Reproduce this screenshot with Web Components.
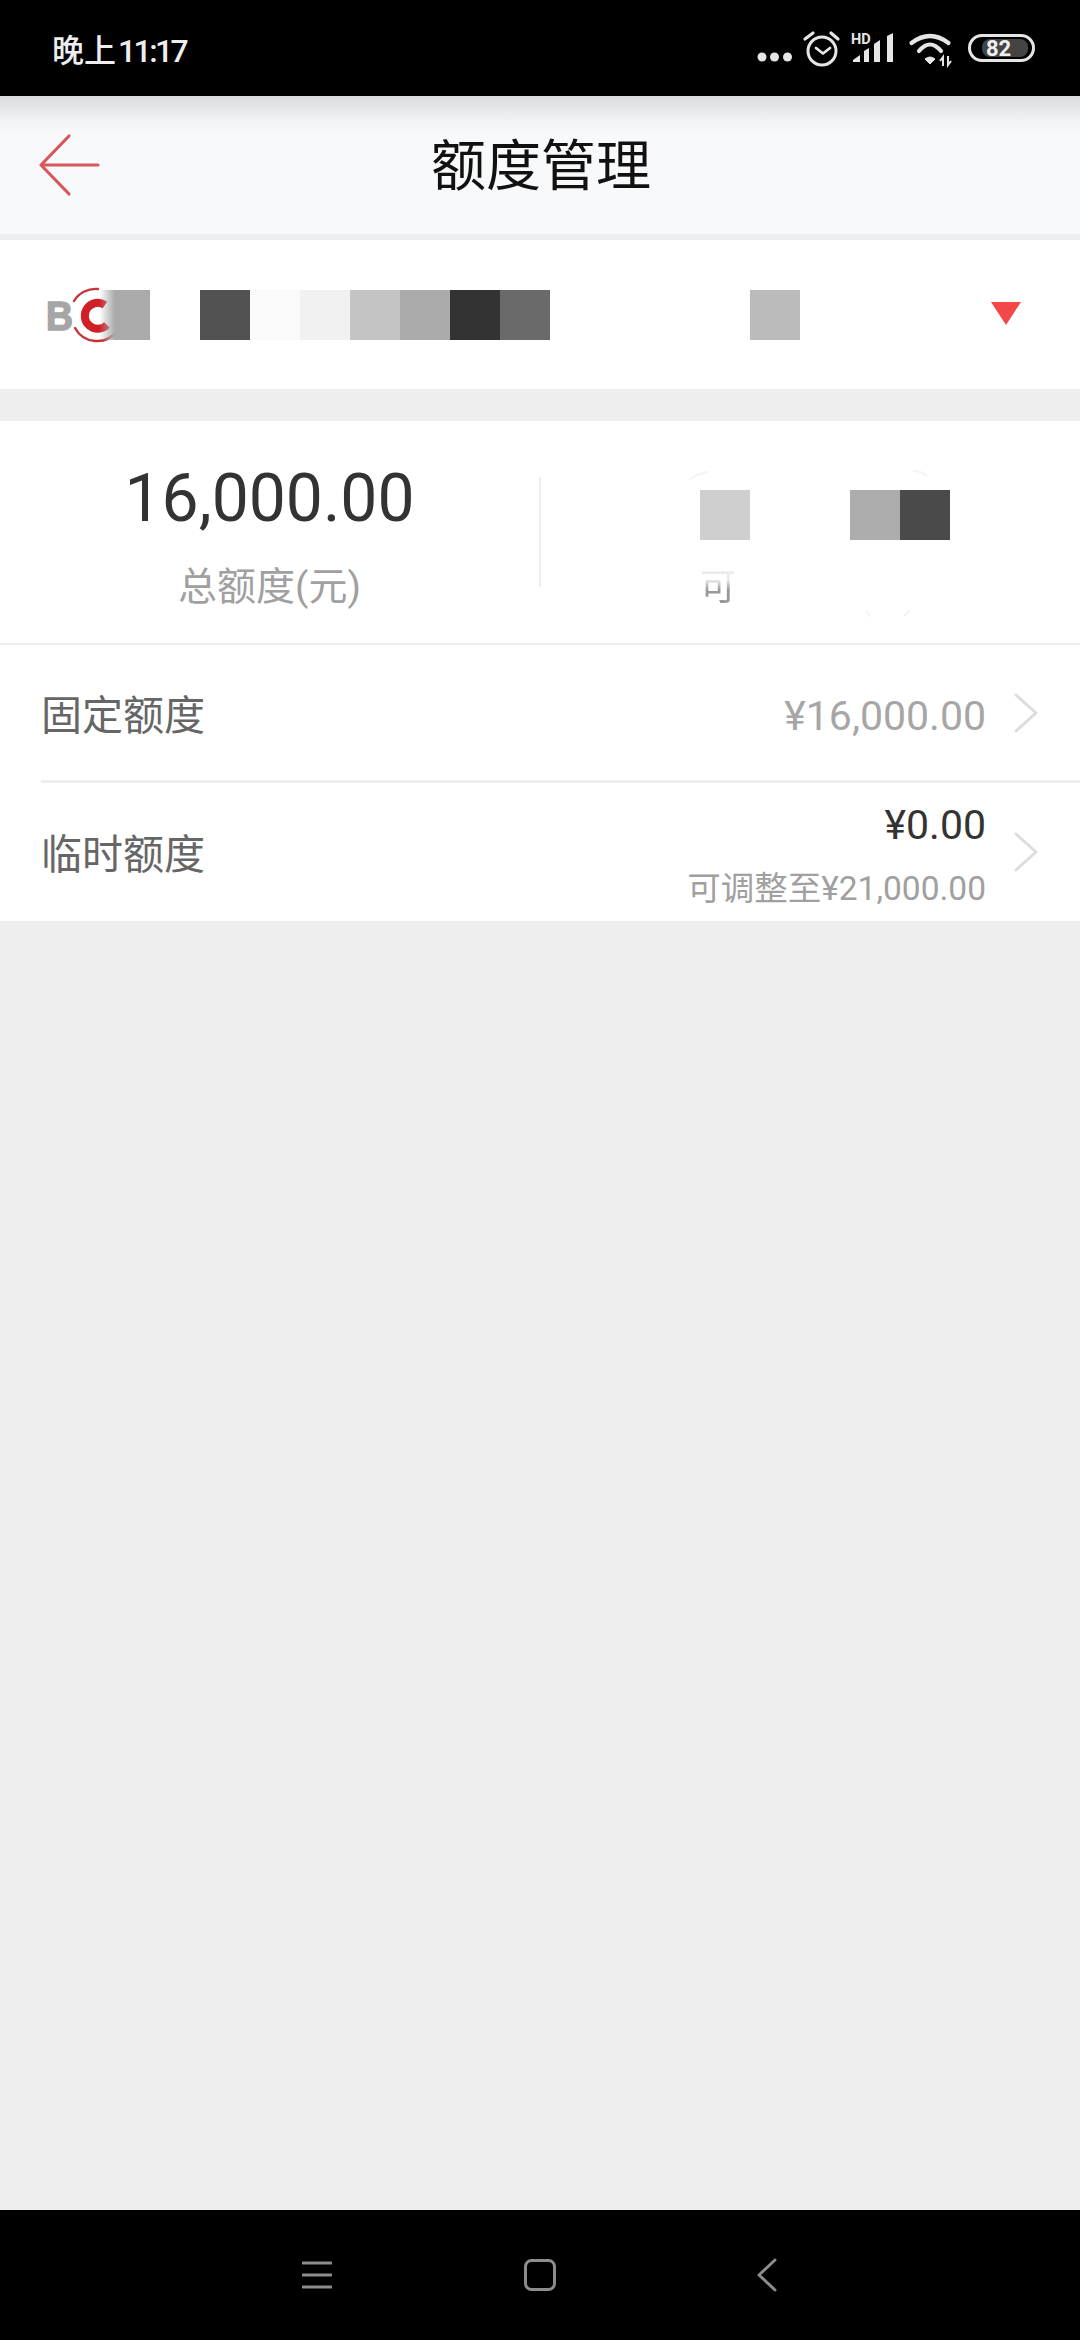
<!DOCTYPE html>
<html lang="zh">
<head>
<meta charset="utf-8">
<title>额度管理</title>
<style>
  html, body { margin: 0; padding: 0; }
  body {
    width: 1080px;
    height: 2340px;
    display: flex;
    flex-direction: column;
    background: #eeeeee;
    font-family: Roboto, "Noto Sans CJK SC", sans-serif;
    overflow: hidden;
  }
</style>
</head>
<body>
  <status-bar></status-bar>
  <app-header>额度管理</app-header>
  <account-card></account-card>
  <quota-stats></quota-stats>
  <quota-row label="固定额度" value="¥16,000.00" muted></quota-row>
  <quota-row label="临时额度" value="¥0.00" note="可调整至¥21,000.00" inset></quota-row>
  <nav-bar></nav-bar>

<script>
  // Base class, every element only differs by its markup
  class ShadowElement extends HTMLElement {
    constructor() {
      super();
      this.attachShadow({ mode: "open" });
    }
    connectedCallback() {
      this.shadowRoot.innerHTML = this.markup();
    }
  }

  class StatusBar extends ShadowElement {
    markup() {
      return `
        <style>
          :host { display: flex; align-items: center; height: 96px; flex: none; background: #000; color: #eee; box-sizing: border-box; padding: 0 0 0 52px; }
          .time { font-size: 32px; font-weight: 500; margin-top: -1px; }
          .time b { font-weight: 500; letter-spacing: -2.600px; margin-left: 2px; }
          svg { margin-left: auto; display: block; }
          text { font-family: Roboto, sans-serif; font-weight: 700; }
        </style>
        <span class="time">晚上<b>11:17</b></span>
        <svg width="323" height="96" viewBox="757 0 323 96" fill="none">
          <g fill="#e6e6e6">
            <circle cx="762" cy="57" r="4.500"/><circle cx="774.500" cy="57" r="4.500"/><circle cx="787.500" cy="57" r="4.500"/>
          </g>
          <g stroke="#e6e6e6" stroke-linecap="round" stroke-linejoin="round">
            <circle cx="822" cy="51" r="14" stroke-width="3"/>
            <path d="M816 48l7 5.500 7-5.500" stroke-width="2.800"/>
            <path d="M805 39l8-6M831 33l7 6" stroke-width="3.200"/>
          </g>
          <text x="851" y="43.500" font-size="14.500" fill="#e6e6e6">HD</text>
          <g fill="#e6e6e6">
            <path d="M853 62v-2l7-5v7z"/>
            <path d="M864 62V51l5-3v14z"/>
            <path d="M874 62V44l6-4v22z"/>
            <path d="M887 62V36l6-3v29z"/>
          </g>
          <g stroke="#e6e6e6" stroke-width="4.200" stroke-linecap="round">
            <path d="M911.500 43Q930 29 948.500 43"/>
            <path d="M919 51Q930 38 941 51"/>
          </g>
          <path d="M925 59Q930 55 935 59L930 64z" fill="#e6e6e6" stroke="#e6e6e6" stroke-linejoin="round"/>
          <path d="M943 66v-9l-3 4M948 56v9l3-4" stroke="#e6e6e6" stroke-width="2"/>
          <rect x="969.500" y="35.500" width="64" height="25" rx="12.500" stroke="#e6e6e6" stroke-width="3"/>
          <rect x="982" y="39" width="46" height="18" rx="8" fill="#444"/>
          <text x="986" y="56" font-size="22" fill="#f0f0f0">82</text>
        </svg>`;
    }
  }

  class AppHeader extends ShadowElement {
    markup() {
      return `
        <style>
          :host { display: flex; align-items: center; justify-content: center; position: relative; height: 138px; flex: none; box-sizing: content-box;
            background: linear-gradient(#d9dbdd 0, #f3f4f6 26px, #f8f9fb 38px); border-bottom: 6px solid #edeef0; }
          .title { font-size: 55px; color: #111; margin-top: -8px; margin-left: 2px; }
          svg { position: absolute; left: 36px; top: 37px; }
        </style>
        <svg width="66" height="64" viewBox="0 0 66 64" fill="none" stroke="#d9575a" stroke-width="3.200" stroke-linecap="round" stroke-linejoin="round">
          <path d="M33 3L5 32l28 29M5 32h57"/>
        </svg>
        <span class="title"><slot></slot></span>`;
    }
  }

  // The blurred blocks that hide account numbers
  class MosaicStrip extends ShadowElement {
    markup() {
      const cells = (this.getAttribute("colors") || "").split(" ").map((c) => `<i style="background:${c}"></i>`);
      return `
        <style>
          :host { display: flex; height: 50px; flex: none; }
          i { display: block; width: 50px; height: 50px; }
        </style>
        ${cells.join("")}`;
    }
  }

  class AccountCard extends ShadowElement {
    markup() {
      return `
        <style>
          :host { display: flex; align-items: center; height: 149px; flex: none; margin-bottom: 32px; background: #fff; box-sizing: border-box; padding-left: 40px; }
          .logo { display: block; flex: none; margin-right: 50px; }
          .logo text { font-family: "Liberation Sans", sans-serif; font-weight: 700; }
          .caret { margin-left: auto; margin-right: 59px; margin-top: -1px; display: block; }
        </style>
        <svg class="logo" width="110" height="60" viewBox="40 285 110 60" fill="none">
          <defs>
            <linearGradient id="fade" x1="0" x2="1" y1="0" y2="0">
              <stop offset="0" stop-color="#aaa" stop-opacity=".05"/>
              <stop offset=".3" stop-color="#aaa"/>
            </linearGradient>
          </defs>
          <text x="46" y="329.500" font-size="41" fill="#a6a6a6" stroke="#a6a6a6" stroke-width="1.600" textLength="27" lengthAdjust="spacingAndGlyphs">B</text>
          <path d="M74 301A25 25 0 0 1 98 289M75 328A25 25 0 0 0 117 331" stroke="#c8323a" stroke-width="2.400" stroke-linecap="round"/>
          <path d="M105 305A13 13 0 1 0 107 325" stroke="#d11f27" stroke-width="8"/>
          <rect x="100" y="290" width="50" height="50" fill="url(#fade)"/>
        </svg>
        <mosaic-strip colors="#525252 #fafafa #f1f1f1 #c4c4c4 #ababab #333333 #6a6a6a transparent transparent transparent transparent #bbbbbb"></mosaic-strip>
        <svg class="caret" width="30" height="24" viewBox="0 0 30 24"><path d="M0 0h30L15 23z" fill="#f44848"/></svg>`;
    }
  }

  class QuotaStats extends ShadowElement {
    markup() {
      return `
        <style>
          :host { display: grid; grid-template-columns: 539px 2px 1fr; height: 224px; flex: none; background: #fff; border-bottom: 2px solid #eee; box-sizing: border-box; }
          .col { display: flex; flex-direction: column; align-items: center; }
          .num { font-size: 66px; line-height: 76px; margin-top: 40px; color: #333; }
          .lbl { font-size: 39px; line-height: 44px; margin-top: 28px; color: #a0a0a0; }
          .rule { background: #eeeeee; height: 110px; margin-top: 56px; }
          .hidden { position: relative; padding: 69px 0 0 159px; display: flex; flex-direction: column; align-items: flex-start; }
          .ghost { font-size: 36px; line-height: 40px; margin-top: 28px; color: #999;
            -webkit-mask-image: linear-gradient(#0003 30%, #000 55%); mask-image: linear-gradient(#0003 30%, #000 55%); }
          /* faint leftovers of the retouched figures */
          .specks { position: absolute; left: 0; top: 0; }
        </style>
        <div class="col">
          <span class="num">16,000.00</span>
          <span class="lbl">总额度(元)</span>
        </div>
        <div class="rule"></div>
        <div class="hidden">
          <mosaic-strip colors="#cfcfcf transparent transparent #adadad #4a4a4a"></mosaic-strip>
          <span class="ghost">可</span>
          <svg class="specks" width="539" height="222" fill="none" stroke="#f3f3f3" stroke-width="2" stroke-linecap="round">
            <path d="M149 58q8-5 17-7M373 50q6 0 12 4M325 190l4 5M368 190l-5 5"/>
          </svg>
        </div>`;
    }
  }

  class QuotaRow extends ShadowElement {
    markup() {
      const note = this.getAttribute("note");
      const muted = this.hasAttribute("muted");
      return `
        <style>
          :host { display: block; flex: none; background: #fff; padding-left: 41px; }
          .row { display: flex; align-items: center; height: 138px; padding-right: 42px; box-sizing: border-box; ${note ? "" : "border-bottom: 3px solid #eee;"} }
          .label { font-size: 41px; color: #666; margin-top: ${note ? -3 : -2}px; }
          .right { margin-left: auto; display: flex; flex-direction: column; align-items: flex-end; margin-right: 28px; margin-top: 6px; }
          .value { font-size: 41px; line-height: 48px; color: ${muted ? "#a6a6a6" : "#333"}; }
          .note { font-size: 33.500px; line-height: 40px; margin-top: 20px; color: #a0a0a0; }
          svg { display: block; flex: none; }
        </style>
        <div class="row">
          <span class="label">${this.getAttribute("label")}</span>
          <div class="right">
            <span class="value">${this.getAttribute("value")}</span>
            ${note ? `<span class="note">${note}</span>` : ""}
          </div>
          <svg width="24" height="40" viewBox="0 0 24 40" fill="none" stroke="#dcdcdc" stroke-width="3" stroke-linecap="round" stroke-linejoin="round">
            <path d="M2 2l20 18L2 38"/>
          </svg>
        </div>`;
    }
  }

  class NavBar extends ShadowElement {
    markup() {
      return `
        <style>
          :host { display: flex; align-items: center; gap: 192px; height: 130px; margin-top: auto; flex: none; background: #000; padding-left: 302px; }
          svg { display: block; }
          .back { margin-left: 9px; }
        </style>
        <svg width="30" height="28" viewBox="0 0 30 28" stroke="#8c8c8c" stroke-width="3" stroke-linecap="round"><path d="M1 2h28M1 14h28M1 26h28"/></svg>
        <svg width="32" height="32" viewBox="0 0 32 32" fill="none" stroke="#8c8c8c" stroke-width="3"><rect x="1.500" y="1.500" width="29" height="29" rx="6"/></svg>
        <svg class="back" width="20" height="34" viewBox="0 0 20 34" fill="none" stroke="#8c8c8c" stroke-width="3" stroke-linecap="round" stroke-linejoin="round"><path d="M18 2L2 17l16 15"/></svg>`;
    }
  }

  // Children first so they exist by the time parents render
  customElements.define("mosaic-strip", MosaicStrip);
  customElements.define("status-bar", StatusBar);
  customElements.define("app-header", AppHeader);
  customElements.define("account-card", AccountCard);
  customElements.define("quota-stats", QuotaStats);
  customElements.define("quota-row", QuotaRow);
  customElements.define("nav-bar", NavBar);
</script>
</body>
</html>
